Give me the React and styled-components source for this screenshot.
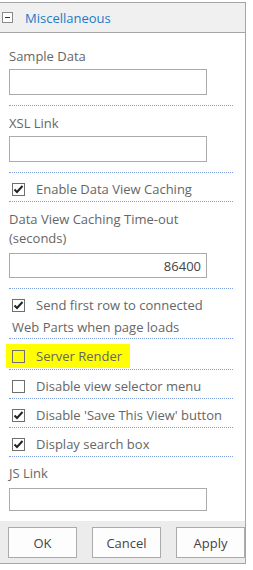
import React from 'react'
import styled, { createGlobalStyle } from 'styled-components'

const GlobalStyle = createGlobalStyle`
    body {
        margin: 0;
        background: #fff;
        font-family: "Open Sans", "Noto Sans", sans-serif;
    }
`;

const Panel = styled.div`
    width: 246px;
    margin-top: 2px;
    box-sizing: border-box;
    border-right: 1px solid #a6a6a6;
`;

const Header = styled.div`
    height: 29px;
    display: flex;
    align-items: center;
    background: #f0f0f0;
    border-top: 1px solid #a6a6a6;
    border-bottom: 1px solid #a6a6a6;
    padding-left: 2px;
`;

const Toggle = styled.span`
    width: 9px;
    height: 9px;
    border: 1px solid #8a8a8a;
    background: #fff;
    display: flex;
    align-items: center;
    justify-content: center;
    margin-right: 12px;
    &::after {
        content: '';
        width: 5px;
        height: 1px;
        background: #333;
    }
`;

const Title = styled.span`
    color: #1a7bc9;
    font-size: 13px;
`;

const Body = styled.div`
    padding: 0 12px 0 9px;
`;

const dotted = '1px dotted #7f9fe0';

const Field = styled.div`
    padding: ${p => p.top || 8}px 0 ${p => p.bottom ?? 10}px;
    border-bottom: ${p => p.last ? 'none' : dotted};
`;

const Label = styled.div`
    color: #666;
    font-size: 13px;
    line-height: 19px;
`;

const TextBox = styled.input`
    display: block;
    box-sizing: border-box;
    width: 198px;
    height: ${p => p.h || 25}px;
    margin-top: ${p => p.gap || 3}px;
    border: 1px solid #ababab;
    background: #fff;
    padding: 0 5px;
    font: 13px "Open Sans", sans-serif;
    color: #444;
    text-align: ${p => p.right ? 'right' : 'left'};
    outline: none;
`;

const CheckRow = styled.div`
    padding: 5px 0 ${p => p.bottom ?? 1}px 3px;
    border-bottom: ${dotted};
    color: #666;
    font-size: 13px;
    line-height: 22px;
`;

const Mark = styled.span`
    display: inline-block;
    vertical-align: -2px;
    width: 13px;
    height: 13px;
    margin-right: 11px;
    & svg { display: block; }
`;

const Highlight = styled.span`
    display: inline-block;
    background: #ffff00;
    margin-left: -6px;
    padding: 1px 8px 1px 6px;
    line-height: 22px;
`;

const Footer = styled.div`
    margin-top: 10px;
    background: #ececec;
    border-bottom: 1px solid #a6a6a6;
    padding: 6px 0 5px 8px;
    display: flex;
    gap: 15px;
`;

const Button = styled.button`
    width: 69px;
    height: 31px;
    box-sizing: border-box;
    background: #fdfdfd;
    border: 1px solid #ababab;
    font: 13px "Open Sans", sans-serif;
    color: #444;
    padding: 0;
`;

const CheckBox = ({ checked }) => (
    <Mark>
        <svg width="13" height="13" viewBox="0 0 13 13">
            <rect x="0.5" y="0.5" width="12" height="12" fill="none" stroke="#6f6f6f" />
            {checked && (
                <path d="M2.5 6.5 L5 9 L10.5 3" fill="none" stroke="#222" strokeWidth="2" />
            )}
        </svg>
    </Mark>
);

const App = () => {
    return (
        <Panel>
            <GlobalStyle />
            <Header>
                <Toggle />
                <Title>Miscellaneous</Title>
            </Header>
            <Body>
                <Field top={14}>
                    <Label>Sample Data</Label>
                    <TextBox h={26} />
                </Field>
                <Field>
                    <Label>XSL Link</Label>
                    <TextBox h={26} />
                </Field>
                <CheckRow>
                    <CheckBox checked />Enable Data View Caching
                </CheckRow>
                <Field>
                    <Label>Data View Caching Time-out (seconds)</Label>
                    <TextBox right gap={5} defaultValue="86400" />
                </Field>
                <CheckRow bottom={0}>
                    <CheckBox checked />Send first row to connected Web Parts when page loads
                </CheckRow>
                <CheckRow>
                    <Highlight><CheckBox />Server Render</Highlight>
                </CheckRow>
                <CheckRow>
                    <CheckBox />Disable view selector menu
                </CheckRow>
                <CheckRow>
                    <CheckBox checked />Disable 'Save This View' button
                </CheckRow>
                <CheckRow>
                    <CheckBox checked />Display search box
                </CheckRow>
                <Field top={7} bottom={0} last>
                    <Label>JS Link</Label>
                    <TextBox gap={5} h={23} />
                </Field>
            </Body>
            <Footer>
                <Button>OK</Button>
                <Button>Cancel</Button>
                <Button>Apply</Button>
            </Footer>
        </Panel>
    )
}

export default App
